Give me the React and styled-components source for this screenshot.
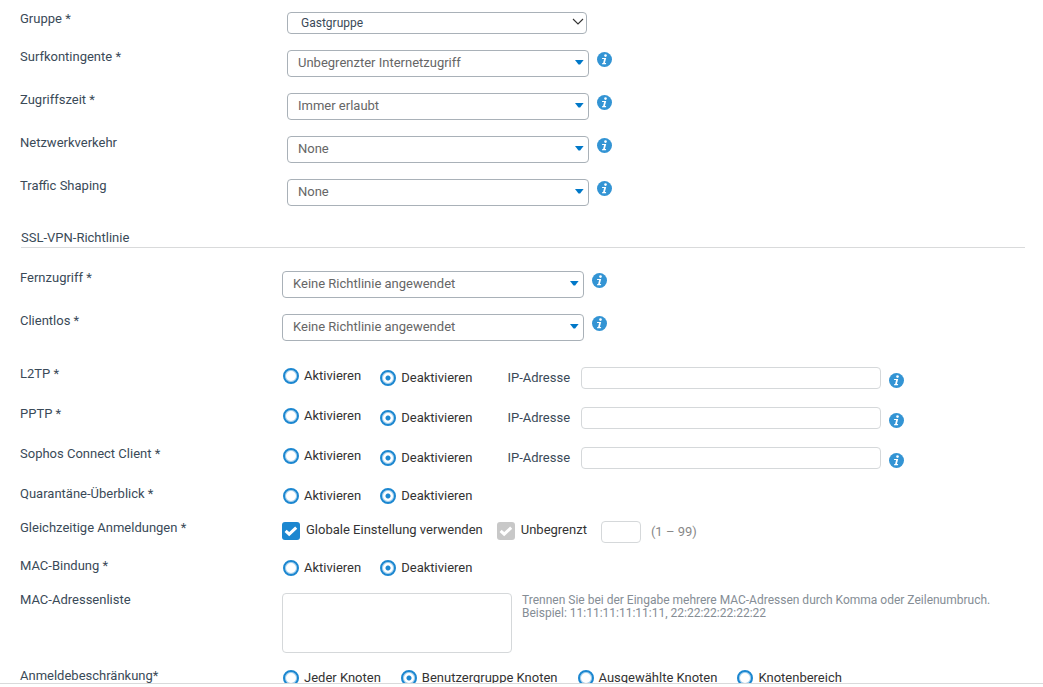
import { useId } from 'react';
import styled, { createGlobalStyle } from 'styled-components';

const GlobalStyle = createGlobalStyle`
  * {
    box-sizing: border-box;
  }
  body {
    margin: 0;
    background: #fff;
    color: #3a4a58;
    font-family: Roboto, 'Liberation Sans', sans-serif;
    font-size: 13px;
    line-height: 18px;
  }
  input, select, textarea {
    margin: 0;
    font: inherit;
    color: inherit;
  }
`;

const Page = styled.div`
  display: flex;
  flex-direction: column;
  height: 100vh;
`;

const Form = styled.form`
  flex: 1;
  min-height: 0;
  overflow: hidden;
  padding: 10px 18px 0 20px;
`;

const Footer = styled.footer`
  height: 4px;
  border-top: 1px solid #d9dadb;
`;

const Row = styled.div`
  display: grid;
  grid-template-columns: ${props => props.$wide ? '267px' : '262px'} minmax(0, 1fr);
  align-items: start;
  min-height: ${props => props.$height}px;
`;

const Label = styled.label``;

const Field = styled.div`
  display: flex;
  align-items: ${props => props.$top ? 'flex-start' : 'center'};
  padding-top: 2px;
`;

const Section = styled.h2`
  margin: 0 0 21px 1px;
  padding-top: 9px;
  border-bottom: 1px solid #d9dadb;
  font-size: 13px;
  font-weight: normal;
  line-height: 18px;
`;

const SelectBox = styled.div`
  position: relative;
  display: flex;
  width: ${props => props.$native ? 300 : 302}px;
`;

const Select = styled.select`
  appearance: none;
  width: 100%;
  height: ${props => props.$native ? 22 : 27}px;
  padding: ${props => props.$native ? '0 24px 0 13px' : '0 24px 2px 10px'};
  border: 1px solid #a9b1b8;
  border-radius: 4px;
  background: #fff;
  color: ${props => props.$native ? '#3a4a58' : '#666'};
  font-size: ${props => props.$native ? 12 : 13}px;
`;

const Caret = styled.svg`
  position: absolute;
  top: 10px;
  right: 5px;
  pointer-events: none;
`;

const Chevron = styled.svg`
  position: absolute;
  top: 6px;
  right: 3px;
  pointer-events: none;
`;

const InfoButton = styled.button`
  display: flex;
  flex: none;
  align-self: ${props => props.$low ? 'flex-end' : 'flex-start'};
  margin: ${props => props.$low ? '0 0 1px 8px' : '2px 0 0 8px'};
  padding: 0;
  border: 0;
  background: none;
`;

const Choice = styled.label`
  display: flex;
  align-items: center;
  gap: 5px;
  height: 18px;
  margin: 0 ${props => props.$loose ? 19 : 18}px 0 1px;
  color: #333;
  ${props => props.$raised ? 'align-self: flex-start;' : ''}
`;

const RadioInput = styled.input`
  appearance: none;
  width: 16px;
  height: 16px;
  border: 2px solid #1c87d0;
  border-radius: 50%;
  background: #fff;
  box-shadow: inset 0 0 0 1px rgba(28, 135, 208, 0.4);
  &:checked {
    background: radial-gradient(circle, #1c87d0 0 2px, #fff 3px);
  }
`;

const CheckLabel = styled.label`
  display: flex;
  align-items: flex-start;
  align-self: flex-start;
  gap: 6px;
  margin-right: 14px;
  color: #333;
`;

const CheckBox = styled.span`
  position: relative;
  display: flex;
  margin-top: 1px;
  svg {
    position: absolute;
    inset: 0;
    pointer-events: none;
  }
`;

const CheckInput = styled.input`
  appearance: none;
  width: 18px;
  height: 18px;
  border-radius: 3px;
  background: #c8c8c8;
  &:checked:enabled {
    background: #1c87d0;
  }
`;

const IpLabel = styled.label`
  margin: 0 11px 0 17px;
`;

const TextInput = styled.input`
  width: ${props => props.$short ? 40 : 300}px;
  height: 22px;
  padding: 0 6px;
  border: 1px solid #d5d8da;
  border-radius: 4px;
`;

const TextArea = styled.textarea`
  flex: none;
  width: 230px;
  height: 60px;
  padding: 4px 6px;
  border: 1px solid #d5d8da;
  border-radius: 4px;
  resize: none;
`;

const Range = styled.span`
  margin-left: 10px;
  color: #888;
`;

const Hint = styled.p`
  margin: 1px 0 0 10px;
  color: #858d95;
  font-size: 12px;
  line-height: 13px;
`;

const Info = ({ low }) => (
  <InfoButton type="button" aria-label="Info" $low={low}>
    <svg width="15" height="15" viewBox="0 0 15 15">
      <circle cx="7.5" cy="7.5" r="7.5" fill="#3394d4" />
      <circle cx="8.5" cy="3.6" r="1.3" fill="#fff" />
      <path d="M5.2 5.9h4L7.9 11h1.3l-.3 1.2H5L5.3 11h.8l1-3.9H4.9z" fill="#fff" />
    </svg>
  </InfoButton>
);

const SelectRow = ({ label, value, native, wide }) => {
  const id = useId();
  return (
    <Row $height={native ? 38 : 43} $wide={wide}>
      <Label htmlFor={id}>{label}</Label>
      <Field $top>
        <SelectBox $native={native}>
          <Select id={id} $native={native}>
            <option>{value}</option>
          </Select>
          {native ?
            <Chevron width="12" height="8" viewBox="0 0 12 8">
              <path d="M1 1l5 5 5-5" fill="none" stroke="#333" strokeWidth="1.1" />
            </Chevron>
            :
            <Caret width="9" height="5" viewBox="0 0 9 5">
              <path d="M0 0h8.6L5.1 4.5H3.5z" fill="#0078c8" />
            </Caret>
          }
        </SelectBox>
        {!native && <Info />}
      </Field>
    </Row>
  );
};

const RadioRow = ({ label, options = ['Aktivieren', 'Deaktivieren'], height, ip, loose }) => {
  const id = useId();
  return (
    <Row $height={height} role="radiogroup" aria-labelledby={`${id}-label`}>
      <Label as="span" id={`${id}-label`}>{label}</Label>
      <Field>
        {options.map((option, i) => (
          <Choice key={option} $raised={i === 0} $loose={loose}>
            <RadioInput type="radio" name={id} defaultChecked={i === 1} />
            {option}
          </Choice>
        ))}
        {ip &&
          <>
            <IpLabel htmlFor={`${id}-ip`}>IP-Adresse</IpLabel>
            <TextInput id={`${id}-ip`} type="text" />
            <Info low />
          </>
        }
      </Field>
    </Row>
  );
};

const Check = ({ label, disabled }) => (
  <CheckLabel>
    <CheckBox>
      <CheckInput type="checkbox" defaultChecked disabled={disabled} />
      <svg width="18" height="18" viewBox="0 0 18 18">
        <path d="M3.6 8.8l3.6 3.4L14.2 5.6" fill="none" stroke="#fff" strokeWidth="3" />
      </svg>
    </CheckBox>
    {label}
  </CheckLabel>
);

export default function App() {
  return (
    <Page>
      <GlobalStyle />
      <Form>
        <SelectRow label="Gruppe *" value="Gastgruppe" native wide />
        <SelectRow label="Surfkontingente *" value="Unbegrenzter Internetzugriff" wide />
        <SelectRow label="Zugriffszeit *" value="Immer erlaubt" wide />
        <SelectRow label="Netzwerkverkehr" value="None" wide />
        <SelectRow label="Traffic Shaping" value="None" wide />

        <Section>SSL-VPN-Richtlinie</Section>
        <SelectRow label="Fernzugriff *" value="Keine Richtlinie angewendet" />
        <SelectRow label="Clientlos *" value="Keine Richtlinie angewendet" />
        <Row $height={10} />

        <RadioRow label="L2TP *" height={40} ip />
        <RadioRow label="PPTP *" height={40} ip />
        <RadioRow label="Sophos Connect Client *" height={40} ip />
        <RadioRow label="Quarantäne-Überblick *" height={34} />
        <Row $height={38}>
          <Label htmlFor="logins">Gleichzeitige Anmeldungen *</Label>
          <Field>
            <Check label="Globale Einstellung verwenden" />
            <Check label="Unbegrenzt" disabled />
            <TextInput id="logins" type="text" $short />
            <Range>(1 – 99)</Range>
          </Field>
        </Row>
        <RadioRow label="MAC-Bindung *" height={34} />
        <Row $height={76}>
          <Label htmlFor="macs">MAC-Adressenliste</Label>
          <Field $top>
            <TextArea id="macs" />
            <Hint>
              Trennen Sie bei der Eingabe mehrere MAC-Adressen durch Komma oder Zeilenumbruch.<br />
              Beispiel: 11:11:11:11:11:11, 22:22:22:22:22:22
            </Hint>
          </Field>
        </Row>
        <RadioRow
          label="Anmeldebeschränkung*"
          options={['Jeder Knoten', 'Benutzergruppe Knoten', 'Ausgewählte Knoten', 'Knotenbereich']}
          height={34}
          loose
        />
      </Form>
      <Footer />
    </Page>
  );
}
